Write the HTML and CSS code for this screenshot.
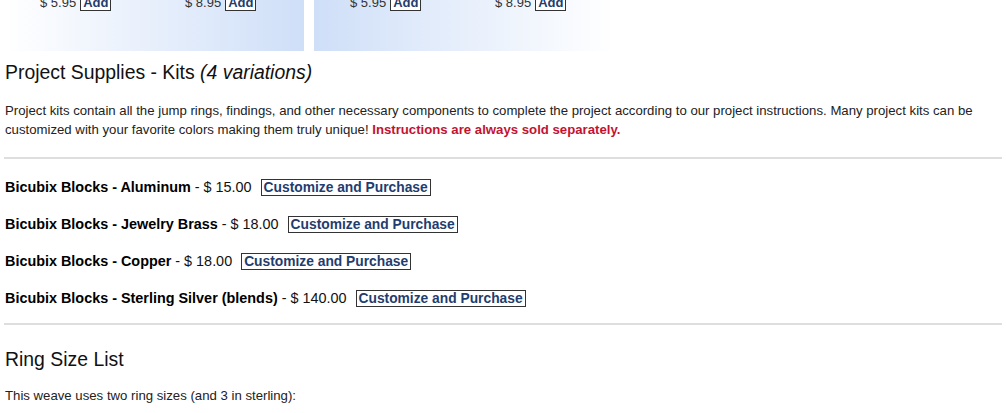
FILE: index.html
```html
<!DOCTYPE html>
<html lang="en">
<head>
  <meta charset="UTF-8" />
  <title>Bicubix Blocks - Project Supplies</title>
  <meta name="viewport" content="width=device-width, initial-scale=1.0">
  <link rel="stylesheet" href="styles.css">
</head>
<body>
  <div class="panels">
    <div class="panel panel-left">
      <div class="panel-item"><span class="price">$ 5.95</span><button class="add-button">Add</button></div>
      <div class="panel-item"><span class="price">$ 8.95</span><button class="add-button">Add</button></div>
    </div>
    <div class="panel panel-right">
      <div class="panel-item"><span class="price">$ 5.95</span><button class="add-button">Add</button></div>
      <div class="panel-item"><span class="price">$ 8.95</span><button class="add-button">Add</button></div>
    </div>
  </div>

  <!-- Kits -->
  <h2 class="section-title">Project Supplies - Kits <em>(4 variations)</em></h2>
  <p class="section-text">
    Project kits contain all the jump rings, findings, and other necessary components to complete the project according to our project instructions. Many project kits can be customized with your favorite colors making them truly unique!
    <strong class="warning">Instructions are always sold separately.</strong>
  </p>

  <hr class="divider">

  <ul class="kit-list">
    <li class="kit"><strong>Bicubix Blocks - Aluminum</strong> - $ 15.00 <button class="buy-button">Customize and Purchase</button></li>
    <li class="kit"><strong>Bicubix Blocks - Jewelry Brass</strong> - $ 18.00 <button class="buy-button">Customize and Purchase</button></li>
    <li class="kit"><strong>Bicubix Blocks - Copper</strong> - $ 18.00 <button class="buy-button">Customize and Purchase</button></li>
    <li class="kit"><strong>Bicubix Blocks - Sterling Silver (blends)</strong> - $ 140.00 <button class="buy-button">Customize and Purchase</button></li>
  </ul>

  <hr class="divider">

  <!-- Ring sizes -->
  <h2 class="section-title ring-title">Ring Size List</h2>
  <p class="section-text ring-text">This weave uses two ring sizes (and 3 in sterling):</p>
</body>
</html>
```

FILE: styles.css
```css
body {
  font-family: "Liberation Sans", Arial, Helvetica, sans-serif;
  color: #222;
  margin: 0 4px;
  background: white;
}

.panels {
  display: flex;
  gap: 10px;
  margin-top: -40px;
}

.panel {
  width: 300px;
  height: 91px;
  display: flex;
  padding-top: 34px;
  box-sizing: border-box;
}

.panel-left {
  background: linear-gradient(to right, #ffffff, #cfdff8);
}

.panel-right {
  background: linear-gradient(to right, #cfdff8, #ffffff);
}

.panel-item {
  width: 145px;
  padding-left: 36px;
  box-sizing: border-box;
  display: flex;
  align-items: baseline;
  gap: 4px;
  font-size: 13px;
  white-space: nowrap;
}

.price {
  color: #333;
}

.add-button {
  font-family: inherit;
  font-size: 13px;
  font-weight: bold;
  color: #1f3d6e;
  background: white;
  border: 1px solid #333;
  padding: 0 2px;
  margin: 0;
}

.section-title {
  font-size: 19.4px;
  font-weight: normal;
  color: #111;
  margin: 10px 0 0 1px;
}

.section-text {
  font-size: 13.2px;
  line-height: 19px;
  color: #222;
  margin: 17px 0 0 1px;
}

.warning {
  color: #c4122f;
}

.divider {
  border: none;
  border-top: 2px solid #dedede;
  margin: 18px 0 0;
}

.kit-list {
  list-style: none;
  margin: 20px 0 0;
  padding: 0 0 0 1px;
  display: flex;
  flex-direction: column;
  gap: 20px;
}

.kit {
  font-size: 14.4px;
  line-height: 17px;
  color: #111;
}

.kit strong {
  color: #000;
}

.buy-button {
  font-family: inherit;
  font-size: 13.8px;
  font-weight: bold;
  color: #1f3d6e;
  background: white;
  border: 1px solid #333;
  padding: 0 2px;
  margin: 0 0 0 5px;
}

.kit-list + .divider {
  margin-top: 16px;
}

.ring-title {
  margin-top: 23px;
}

.ring-text {
  margin-top: 15px;
}
```
